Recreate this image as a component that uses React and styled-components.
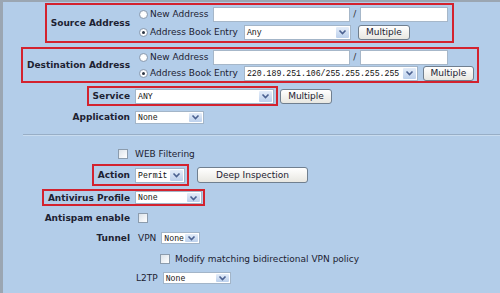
import React from 'react';
import styled, { createGlobalStyle } from 'styled-components';

const RED = '#d3222e';

const GlobalStyle = createGlobalStyle`
  html, body { margin: 0; padding: 0; background: #b3cde9; }
  body {
    font-family: "DejaVu Sans", Verdana, sans-serif;
    font-size: 9px;
    color: #1d2232;
  }
`;

const Page = styled.div`
  box-sizing: border-box;
  width: 500px;
  height: 293px;
  overflow: hidden;
  border-top: 2px solid #9ba6b2;
  border-left: 3px solid #9ba6b2;
  background: #b3cde9;
  display: flex;
  flex-direction: column;
`;

const Row = styled.div`
  display: flex;
  align-items: stretch;
  flex: none;
  height: ${p => p.$h}px;
  margin-top: ${p => p.$mt || 0}px;
`;

const LabelCol = styled.div`
  width: 131px;
  flex: none;
  display: flex;
  justify-content: flex-end;
  align-items: stretch;
`;

const Label = styled.div`
  box-sizing: border-box;
  display: flex;
  align-items: center;
  padding: 0 4px;
  white-space: nowrap;
  font-weight: ${p => (p.$plain ? 400 : 700)};
  border: 2px solid ${p => (p.$hl ? RED : 'transparent')};
  border-right: none;
`;

const Controls = styled.div`
  box-sizing: border-box;
  display: flex;
  flex-direction: ${p => (p.$stack ? 'column' : 'row')};
  justify-content: ${p => (p.$stack ? 'center' : 'flex-start')};
  align-items: ${p => (p.$stack ? 'flex-start' : 'center')};
  padding-right: ${p => (p.$pr ?? 2)}px;
  border: 2px solid ${p => (p.$hl ? RED : 'transparent')};
  border-left: none;
`;

const SubRow = styled.div`
  display: flex;
  align-items: center;
  height: ${p => p.$h}px;
`;

const Text = styled.span`
  white-space: nowrap;
  margin-left: ${p => p.$ml || 0}px;
`;

const Radio = styled.span`
  box-sizing: border-box;
  width: 9px;
  height: 9px;
  margin-left: 5px;
  border-radius: 50%;
  border: 1px solid #8e9db0;
  background: radial-gradient(circle at 50% 50%, #ffffff 40%, #e3e8ee 100%);
  display: flex;
  align-items: center;
  justify-content: center;
  flex: none;
  &::after {
    content: '';
    width: 3px;
    height: 3px;
    border-radius: 50%;
    background: ${p => (p.$checked ? '#2d3644' : 'transparent')};
  }
`;

const Check = styled.span`
  box-sizing: border-box;
  display: inline-block;
  flex: none;
  width: ${p => p.$s || 10}px;
  height: ${p => p.$s || 10}px;
  margin-left: ${p => p.$ml || 0}px;
  margin-right: ${p => p.$mr || 0}px;
  border: 1px solid #8c9cad;
  background: linear-gradient(135deg, #dce3ea, #ffffff);
`;

const Field = styled.input`
  box-sizing: border-box;
  flex: none;
  width: ${p => p.$w}px;
  height: 15px;
  margin: 0 0 0 ${p => p.$ml || 0}px;
  padding: 0;
  border: 1px solid #a6b7c9;
  background: #fff;
  outline: none;
`;

const Slash = styled.span`
  margin: 0 4px 0 3px;
  color: #333;
`;

const SelectBox = styled.div`
  box-sizing: border-box;
  flex: none;
  display: flex;
  align-items: stretch;
  width: ${p => p.$w}px;
  height: ${p => p.$h || 15}px;
  margin-left: ${p => p.$ml || 0}px;
  border: 1px solid #a3b5c8;
  background: #fff;
`;

const SelectValue = styled.div`
  flex: 1;
  min-width: 0;
  display: flex;
  align-items: center;
  padding-left: 2px;
  font-family: "Liberation Mono", "DejaVu Sans Mono", monospace;
  font-size: 8.2px;
  color: #111;
  white-space: nowrap;
  overflow: hidden;
`;

const SelectArrow = styled.div`
  flex: none;
  width: 13px;
  margin: 1px;
  border-radius: 1px;
  background: linear-gradient(#e4edf9, #bcd0ec);
  display: flex;
  align-items: center;
  justify-content: center;
`;

const Button = styled.div`
  box-sizing: border-box;
  flex: none;
  align-self: center;
  display: flex;
  align-items: center;
  justify-content: center;
  width: ${p => p.$w}px;
  height: ${p => p.$h || 15}px;
  margin-left: ${p => p.$ml || 0}px;
  border: 1px solid #707f8f;
  border-radius: 3px;
  background: linear-gradient(#ffffff, #e8e7e1);
  color: #1d2232;
  white-space: nowrap;
`;

const Separator = styled.div`
  flex: none;
  margin: ${p => p.$mt}px 0 0 20px;
  height: 0;
  border-top: 1px solid #98aec6;
  border-bottom: 1px solid #c9dcef;
`;

const Select = ({ value, w, h, ml }) => (
  <SelectBox $w={w} $h={h} $ml={ml}>
    <SelectValue>{value}</SelectValue>
    <SelectArrow>
      <svg width="9" height="6" viewBox="0 0 9 6">
        <polyline points="1.5,1.5 4.5,4.5 7.5,1.5" fill="none" stroke="#4b6190" strokeWidth="1.6" />
      </svg>
    </SelectArrow>
  </SelectBox>
);

const AddressRow = ({ label, h, mt, sub, pr, selectValue, selectW, multML, multW }) => (
  <Row $h={h} $mt={mt}>
    <LabelCol>
      <Label $hl>{label}</Label>
    </LabelCol>
    <Controls $hl $stack $pr={pr}>
      <SubRow $h={sub}>
        <Radio />
        <Text $ml={2}>New Address</Text>
        <Field $w={137} $ml={5} />
        <Slash>/</Slash>
        <Field $w={88} />
      </SubRow>
      <SubRow $h={sub}>
        <Radio $checked />
        <Text $ml={2}>Address Book Entry</Text>
        <Select value={selectValue} w={selectW} ml={6} />
        <Button $w={multW} $ml={multML}>Multiple</Button>
      </SubRow>
    </Controls>
  </Row>
);

export default function App() {
  return (
    <>
      <GlobalStyle />
      <Page>
        <AddressRow
          label="Source Address"
          h={40}
          mt={1}
          sub={18}
          pr={4}
          selectValue="Any"
          selectW={107}
          multML={7}
          multW={52}
        />
        <AddressRow
          label="Destination Address"
          h={36}
          mt={4}
          sub={16}
          pr={3}
          selectValue="220.189.251.106/255.255.255.255"
          selectW={174}
          multML={5}
          multW={51}
        />

        <Row $h={20} $mt={3}>
          <LabelCol>
            <Label $hl>Service</Label>
          </LabelCol>
          <Controls $hl>
            <Select value="ANY" w={139} ml={1} />
          </Controls>
          <Button $w={52} $ml={2}>Multiple</Button>
        </Row>

        <Row $h={22}>
          <LabelCol>
            <Label>Application</Label>
          </LabelCol>
          <Controls>
            <Select value="None" w={69} h={13} ml={1} />
          </Controls>
        </Row>

        <Separator $mt={6} />

        <Row $h={16} $mt={10}>
          <LabelCol>
            <Label $plain>
              <Check $s={10} $mr={2} />
            </Label>
          </LabelCol>
          <Controls>
            <Text $ml={1}>WEB Filtering</Text>
          </Controls>
        </Row>

        <Row $h={22} $mt={2}>
          <LabelCol>
            <Label $hl>Action</Label>
          </LabelCol>
          <Controls $hl $pr={2}>
            <Select value="Permit" w={50} ml={1} />
          </Controls>
          <Button $w={111} $h={16} $ml={8}>Deep Inspection</Button>
        </Row>

        <Row $h={17} $mt={3}>
          <LabelCol>
            <Label $hl>Antivirus Profile</Label>
          </LabelCol>
          <Controls $hl $pr={1}>
            <Select value="None" w={67} h={13} ml={1} />
          </Controls>
        </Row>

        <Row $h={18} $mt={3}>
          <LabelCol>
            <Label>Antispam enable</Label>
          </LabelCol>
          <Controls>
            <Check $s={10} $ml={4} />
          </Controls>
        </Row>

        <Row $h={18} $mt={2}>
          <LabelCol>
            <Label>Tunnel</Label>
          </LabelCol>
          <Controls>
            <Text $ml={4}>VPN</Text>
            <Select value="None" w={39} h={12} ml={5} />
          </Controls>
        </Row>

        <Row $h={18} $mt={3}>
          <LabelCol />
          <Controls>
            <Check $s={10} $ml={26} />
            <Text $ml={5}>Modify matching bidirectional VPN policy</Text>
          </Controls>
        </Row>

        <Row $h={18} $mt={1}>
          <LabelCol />
          <Controls>
            <Text $ml={2}>L2TP</Text>
            <Select value="None" w={68} h={12} ml={5} />
          </Controls>
        </Row>
      </Page>
    </>
  );
}
